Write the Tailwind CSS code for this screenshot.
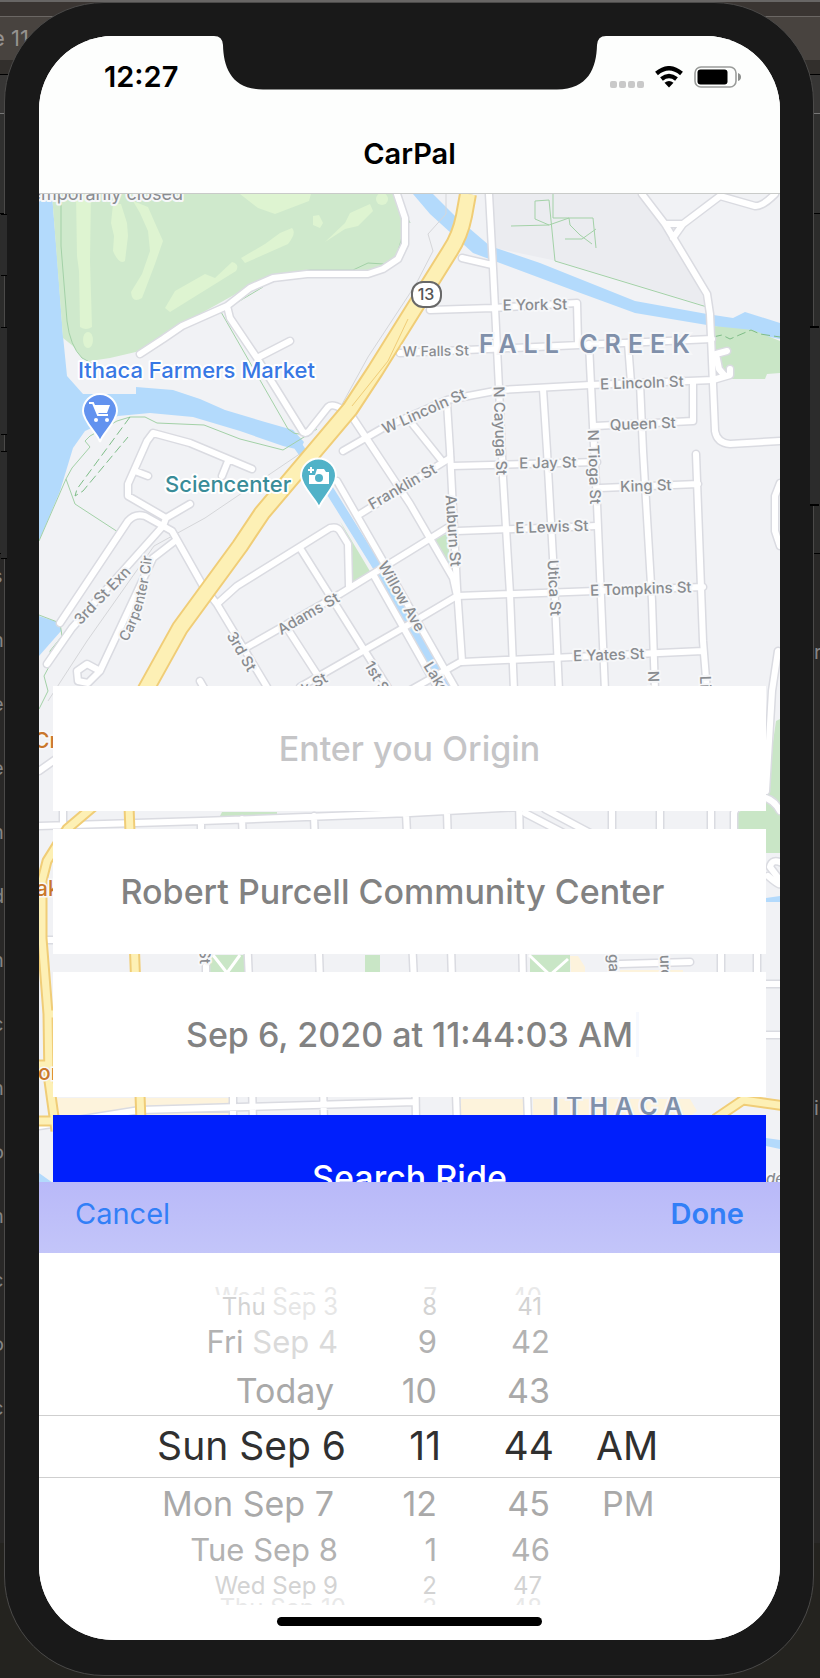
<!DOCTYPE html>
<html lang="en">
<head>
<meta charset="utf-8">
<meta name="viewport" content="width=device-width, initial-scale=1">
<title>CarPal</title>
<script src="https://cdn.jsdelivr.net/npm/@tailwindcss/browser@4"></script>
</head>
<body class="relative overflow-x-hidden bg-[#24231f] pt-[2px] pr-[6px] pb-[2px] pl-1 font-['Inter',sans-serif]">

<!-- Desktop behind the simulator -->
<div class="absolute inset-0 overflow-hidden" aria-hidden="true">
  <div class="h-[2px] bg-[#686665]"></div>
  <div class="h-[14px] bg-[#3a3532]"></div>
  <div class="flex h-[44px] items-center border-t border-[#6b6764] bg-[#48433f] text-[22px] text-[#969290]"><span class="-ml-2">e 11</span></div>
  <div class="h-[15px] border-b border-black bg-[#322f2c]"></div>
  <div class="h-[38px] bg-[#373635]"></div>
  <div class="h-[100px] border-t border-[#777] bg-[#30302f]"></div>
  <div class="h-[340px] border-t border-black bg-[#2c2c2b]"></div>
  <div class="flex h-[990px] justify-between border-t border-black bg-[#292827] text-[20px] text-[#858585]">
    <div class="-ml-2 flex flex-col gap-9 pt-2 leading-7">
      <span>s</span><span>n</span><span>e</span><span>e</span><span>n</span><span>d</span><span>n</span><span>c</span><span>n</span><span>o</span><span>n</span><span>c</span><span>o</span><span>c</span>
    </div>
    <div class="flex w-[6px] flex-col gap-[428px] pt-[84px] leading-7"><span>r</span><span>i</span></div>
  </div>
</div>

<div class="relative rounded-[100px] border border-[#4b4a49] bg-[#191919] pt-[33px] pr-[33px] pb-[35px] pl-[34px]">
  <!-- Hardware buttons -->
  <div class="absolute top-[211px] -left-1 h-[62px] w-[6px] border-y border-black bg-[#2c2c2c]"></div>
  <div class="absolute top-[324px] -left-1 h-[108px] w-[6px] border-y border-black bg-[#2c2c2c]"></div>
  <div class="absolute top-[448px] -left-1 h-[108px] w-[6px] border-y border-black bg-[#2c2c2c]"></div>
  <div class="absolute top-[323px] -right-[6px] h-[180px] w-[9px] border-y-2 border-black bg-[#2c2c2c]"></div>

  <div class="relative overflow-hidden rounded-[74px] bg-white">

    <!-- Status bar and title -->
    <header class="relative z-10 h-[158px] border-b border-[#c9cbc9] bg-[#fdfefd]">
      <svg class="absolute top-0 left-1/2 w-[392px] -translate-x-1/2" viewBox="0 0 392 54" aria-hidden="true">
        <path d="M0 0Q8.500 0 9 9C9.500 32 18 53.500 49 53.500H343C374 53.500 382.500 32 383 9Q383.500 0 392 0Z" fill="#191919"/>
      </svg>
      <div class="flex h-[82px] items-center justify-between pr-[39px] pl-[65px]">
        <time class="text-[29px] font-semibold text-black">12:27</time>
        <div class="flex items-center gap-[11px]">
          <svg width="34" height="22" viewBox="0 0 34 22" fill="#c9c9c9" aria-hidden="true">
            <rect x="0" y="15" width="7" height="7" rx="2"/><rect x="9" y="15" width="7" height="7" rx="2"/><rect x="18" y="15" width="7" height="7" rx="2"/><rect x="27" y="15" width="7" height="7" rx="2"/>
          </svg>
          <svg width="28" height="22" viewBox="0 0 28 22" aria-label="Wi-Fi">
            <path d="M1.500 7.500Q14-3 26.500 7.500M6.500 13Q14 7 21.500 13" fill="none" stroke="#000" stroke-width="4.400"/>
            <path d="M9.500 16.800Q14 13 18.500 16.800L14 21.500Z"/>
          </svg>
          <svg width="47" height="22" viewBox="0 0 47 22" aria-label="Battery">
            <rect x="1" y="1" width="41" height="20" rx="6" fill="none" stroke="#9a9c9a" stroke-width="1.600"/>
            <rect x="3.500" y="3.500" width="30" height="15" rx="3"/>
            <path d="M44 7Q47 8 47 11T44 15Z" fill="#8d8f8d"/>
          </svg>
        </div>
      </div>
      <h1 class="pt-[18px] text-center text-[29px] leading-9 font-semibold text-black">CarPal</h1>
    </header>

    <main class="relative px-[14px] pt-[492px]">
      <!-- Map canvas -->
      <svg class="absolute inset-0 h-full w-full" viewBox="39 193 741 1047" preserveAspectRatio="xMidYMin slice" role="img" aria-label="Map of Ithaca">
        <defs>
          <g id="roads" fill="none" stroke-linecap="round" stroke-linejoin="round">
            <path d="M397 193L405 217V243L398 258L383 268L368 273H307L273 277L250 287L227 305L182 325L163 338L140 353M227 305L230 317L257 357L303 431Q306 433 309 430L328 406Q332 402 342 408M257 357L290 340"/>
            <path d="M489 193L493 267L499 387L503 477L510 593L514 690M462 257L492 264M430 309L493 307L577 302L578 342M400 352L712 338M343 450L383 427L447 399L500 389L590 384L713 379L730 374V368"/>
            <path d="M589 343L593 425L597 503L605 690M628 342L631 382M640 382L643 450L652 600L655 690M693 382V420L595 425M543 388L547 450L553 557L559 690M447 402L450 450L457 587L462 660L400 695"/>
            <path d="M642 193L665 223L707 293L710 313L715 430Q717 442 730 443L780 440M673 237L683 223L720 195L755 205Q762 206 775 193M665 223H683M727 350L716 353L719 368L724 374"/>
            <path d="M452 465L597 461M600 487L698 483M696 453L703 640L707 690M457 530L597 525M457 595L703 586M462 661L703 650"/>
            <path d="M357 515L450 457M337 480L383 560L457 690M373 573L445 700M353 417L410 503L453 577L457 595M410 420L442 460M240 650L340 593L410 550L447 527M300 686L403 627L457 595"/>
            <path d="M60 622L128 520Q135 512 145 515L172 530L203 585L217 603L267 686M217 603L237 585L330 527Q337 525 340 530L348 543L349 585M300 547L390 690M287 627L320 678M200 680L208 694"/>
            <path d="M47 663L72 627L163 525L166 517L128 495V483L147 440L153 432L190 442L252 468M190 503L166 517M135 470L148 475M228 460L222 475M175 540L153 557L100 670M100 670L87 663L77 670L78 680L88 682L100 670M780 482L775 495V530L780 545M778 650L772 690L766 790"/>
            <path d="M39 825L201 820L410 812L520 806M39 770L56 758M63 825V800M201 820V835M242 818L249 980L253 1120M314 815L320 980L324 1120M406 812L414 980L416 1120M447 811L452 980L457 1120M519 800L523 980L528 1120M525 812L575 838M545 808L590 832M612 800V835M660 800V835M711 800V835M734 835V812Q738 800 757 796Q772 795 780 810M721 950V980M757 950V980M206 965V980M233 1090V1120M39 1125L140 1109L415 1101M620 963L690 961M766 983H780M766 1034H780M43 939H56M768 875Q785 890 779 878L770 866Q772 857 782 862"/>
          </g>
          <path id="r13" d="M468 193L464 215Q460 235 450 250L425 290L375 370L350 408L323 440L262 512L240 545L180 627L145 690" fill="none" stroke-linejoin="round"/>
          <path id="yellow" d="M100 800L67 828L47 860L42 880V937L48 1013L49 1080L56 1130M129 805L135 963L141 1120M39 1120H53M39 1064H50M48 1013H56M715 1118L743 1099L785 1105" fill="none" stroke-linejoin="round"/>
          <path id="carpenter" d="M127 641Q149 605 153 540" fill="none"/>
        </defs>
        <rect x="39" y="193" width="741" height="1047" fill="#f1f2f5"/>
        <path d="M492 193H640L690 267L707 305L557 260L495 247Z" fill="#ebecf0"/>
        <path d="M39 193H52L57 255L63 335L67 375L83 393H136V386L173 389L200 398L225 409L265 421L293 429L304 441L300 449L283 445L240 430L193 416L150 412L118 415L85 430L73 447L60 490L39 540ZM39 615L60 622L61 630L39 655ZM413 193H433L455 215L490 245L540 262L635 300L707 313L733 317L745 311L780 322V338L735 329L707 324L635 312L575 290L473 252L430 213ZM39 1172L53 1182L60 1240H39ZM766 897L780 895V901H766ZM766 1137L780 1139V1148L766 1145Z" fill="#b3dafc"/>
        <path d="M298 445L330 490L378 567L408 622L452 694" fill="none" stroke="#b3dafc" stroke-width="9"/>
        <path d="M52 193H397L405 243L398 258L368 271L307 273L250 285L182 323L140 350L110 357L90 360L82 357L73 345L63 337Z" fill="#cfe9cc"/>
        <g fill="#def4d1">
          <path d="M76 193H91L90 260L92 326Q86 330 80 326L79 270L77 255ZM113 203L111 222L114 235L113 250Q119 264 125 260L128 235L127 222L121 203ZM133 200L140 212L148 230L150 250L142 273L131 291Q132 303 142 297L155 263L163 240L155 222L148 206ZM165 307L175 290L205 273L215 277L232 261Q240 263 236 270L170 311ZM241 257L265 243L280 232L292 227Q297 232 288 243L245 262ZM325 241L345 222L350 212L370 203L373 210L358 225L345 228ZM240 193H311L309 200L275 213L258 207ZM313 215L319 214L323 222L320 227L313 224Z"/>
          <ellipse cx="88" cy="339" rx="5" ry="8"/><circle cx="382" cy="198" r="6"/>
        </g>
        <path d="M713 325L753 329L780 340V372L767 373L765 378H723L715 357ZM340 520L350 540V582L371 572ZM432 538L447 533L452 575ZM776 720L780 718V852H738V812L766 790ZM222 811H277V815H220ZM210 954H245V972H210ZM365 954H380V972H365ZM530 954H570V972H530Z" fill="#c9e6c6"/>
        <path d="M570 955H578L585 966V972H571ZM620 969H683V972H620ZM53 1097H229V1115H53ZM461 1098H526V1115H461ZM533 1098H690L697 1110L690 1115H533Z" fill="#fdf3dc"/>
        <g fill="none" stroke="#a3d1a7">
          <path d="M61 193V245L67 320Q70 345 82 357L92 362M397 193L410 222M402 236L396 257L384 263L368 262L353 269H310L275 274L262 280L263 286L221 311L288 428Q300 440 317 425M221 311L227 305M117 420L130 416H145L157 422L204 424L240 438L283 449L317 428M117 420L90 435L85 440L90 446L72 467L66 478L75 503L118 531M66 478L39 540M39 614L60 622L62 635L50 650L52 660L44 675L48 690L39 708M553 193V217H593L596 247M535 200L549 199L555 260L707 306M535 200V218L549 224L569 217L570 224L580 234L592 243M511 225L549 224M565 238H582L596 228"/>
          <path d="M130 416L77 488L75 495L83 490L128 436M713 336L722 334L730 338L751 329L760 333L780 336" stroke="#7fbd88" stroke-dasharray="9 4"/>
        </g>
        <path d="M446 193V213L428 233L433 250L416 283L368 356L340 407M304 450L205 517L154 545L87 640L48 700" fill="none" stroke="#d5d6d9"/>
        <use href="#roads" stroke="#dadbe1" stroke-width="9"/>
        <use href="#roads" stroke="#fff" stroke-width="6"/>
        <path d="M213 954L227 972L240 954M529 954L550 974L568 958" fill="none" stroke="#fff" stroke-width="3"/>
        <use href="#yellow" stroke="#f0cd77" stroke-width="11"/><use href="#yellow" stroke="#fdf0b5" stroke-width="7"/>
        <use href="#r13" stroke="#f0cd77" stroke-width="18"/><use href="#r13" stroke="#fdf0b5" stroke-width="14"/>
        <path d="M408 318L388 360L352 405" fill="none" stroke="#f0cd77"/>

        <rect x="412" y="281" width="29" height="25" rx="11" fill="#fff" stroke="#686868" stroke-width="2"/>
        <text x="426" y="299" text-anchor="middle" font-size="16" font-weight="500" fill="#555">13</text>

        <g font-size="15" font-weight="500" fill="#898c90" stroke="#f6f7f9" stroke-width="4" stroke-linejoin="round" paint-order="stroke" text-anchor="middle">
          <text transform="translate(535 309) rotate(-1)">E York St</text>
          <text transform="translate(436 355) rotate(-1)" font-size="14">W Falls St</text>
          <text transform="translate(642 387) rotate(-2)">E Lincoln St</text>
          <text transform="translate(643 428) rotate(-2)">Queen St</text>
          <text transform="translate(548 467) rotate(-1)">E Jay St</text>
          <text transform="translate(646 490) rotate(-2)">King St</text>
          <text transform="translate(552 531) rotate(-2)">E Lewis St</text>
          <text transform="translate(641 593) rotate(-2)">E Tompkins St</text>
          <text transform="translate(609 659) rotate(-2)">E Yates St</text>
          <text transform="translate(426 415) rotate(-24)">W Lincoln St</text>
          <text transform="translate(405 490) rotate(-30)">Franklin St</text>
          <text transform="translate(311 617) rotate(-30)">Adams St</text>
          <text transform="translate(317 687) rotate(-30)">k St</text>
          <text transform="translate(495 430) rotate(88)">N Cayuga St</text>
          <text transform="translate(589 466) rotate(88)">N Tioga St</text>
          <text transform="translate(448 530) rotate(86)">Auburn St</text>
          <text transform="translate(549 587) rotate(87)">Utica St</text>
          <text transform="translate(397 598) rotate(60)">Willow Ave</text>
          <text transform="translate(423 665) rotate(58)" text-anchor="start">Lake</text>
          <text transform="translate(237 653) rotate(60)">3rd St</text>
          <text transform="translate(364 664) rotate(60)" text-anchor="start">1st St</text>
          <text transform="translate(106 598) rotate(-46)">3rd St Exn</text>
          <text text-anchor="start" font-size="14"><textPath href="#carpenter">Carpenter Cir</textPath></text>
          <text transform="translate(648 670) rotate(88)" text-anchor="start">N A</text>
          <text transform="translate(700 675) rotate(88)" text-anchor="start">Lin</text>
          <text transform="translate(200 963) rotate(88)" text-anchor="end">St</text>
          <text transform="translate(609 971) rotate(88)" text-anchor="end">ga</text>
          <text transform="translate(660 954) rotate(88)" text-anchor="start">uro</text>
          <text x="183" y="199" text-anchor="end" font-size="18" font-weight="400">emporarily closed</text>
          <text x="766" y="1183" text-anchor="start" font-style="italic">de</text>
        </g>
        <g font-size="21" font-weight="500" fill="#c9772b" stroke="#f8f8f8" stroke-width="3" paint-order="stroke">
          <text x="34" y="747">Cr</text><text x="36" y="895">ak</text><text x="38" y="1079">or</text>
        </g>
        <g font-weight="600" fill="#8090aa" stroke="#f6f7f9" stroke-width="4" paint-order="stroke" font-size="25">
          <text x="479" y="352" letter-spacing="7">FALL CREEK</text>
          <text x="552" y="1114" letter-spacing="7">ITHACA</text>
        </g>
        <g stroke="#fff" stroke-width="4" stroke-linejoin="round" paint-order="stroke" font-size="22" font-weight="500">
          <text x="78" y="377" fill="#3878e4">Ithaca Farmers Market</text>
          <text x="165" y="491" fill="#398c98">Sciencenter</text>
        </g>
        <g stroke="#fff" stroke-width="2">
          <path d="M100 441C99 434 83 421 83 410A17 17 0 0 1 117 410C117 421 101 434 100 441Z" fill="#6292ef"/>
          <path d="M319 507C318 500 301 486 301 475A17 17 0 0 1 336 475C336 486 320 500 319 507Z" fill="#51b2c8"/>
        </g>
        <path d="M89 402H93L98 414H108" fill="none" stroke="#fff" stroke-width="2"/>
        <path d="M94 404H110L107 412H97Z" fill="#fff"/><circle cx="96" cy="419" r="2" fill="#fff"/><circle cx="107" cy="419" r="2" fill="#fff"/>
        <path d="M309 474H315L317 468H324L326 471H329V483H309Z" fill="#fff"/>
        <path d="M308 469H314M311 466V472" stroke="#fff" stroke-width="2"/>
        <circle cx="319" cy="477" r="4" fill="#51b2c8"/>
      </svg>

      <form class="relative flex flex-col gap-[18px] text-[34px] font-medium">
        <input type="text" aria-label="Origin" placeholder="Enter you Origin" class="h-[125px] w-full bg-white text-center text-[#828282] outline-none placeholder:text-[#c5c5c7]">
        <input type="text" aria-label="Destination" value="Robert Purcell Community Center" class="h-[125px] w-full bg-white pr-[34px] text-center text-[#828282] outline-none">
        <div class="relative">
          <input type="text" aria-label="Departure time" value="Sep 6, 2020 at 11:44:03 AM" class="h-[125px] w-full bg-white text-center text-[#828282] outline-none">
          <span class="absolute top-10 left-1/2 ml-[226px] h-[45px] w-[3px] bg-[#f7f9fe]" aria-hidden="true"></span>
        </div>
        <button type="button" class="h-[125px] w-full bg-[#001ffc] text-white">Search Ride</button>
      </form>
    </main>

    <!-- Date picker sheet -->
    <section class="relative -mt-[58px] bg-white" aria-label="Departure date and time">
      <div class="flex h-[71px] items-center justify-between bg-linear-to-b from-[#b9b9f9] to-[#c3c5f9] px-9 pb-2 text-[29px] text-[#327ff7]">
        <button type="button">Cancel</button>
        <button type="button" class="font-semibold">Done</button>
      </div>
      <div class="pt-[34px] whitespace-nowrap text-[#a9a9a9]">
        <div class="grid h-2 grid-cols-[185px_95px_113px_104px] items-center justify-center overflow-hidden text-right text-[24px] leading-5 text-[#e9e9e9]">
          <span class="pr-2">Wed Sep 2</span><span class="pr-1">7</span><span class="pr-3">40</span>
        </div>
        <div class="grid h-6 grid-cols-[185px_95px_113px_104px] items-center justify-center text-right text-[24px] leading-6 text-[#d3d3d3]">
          <span class="pr-2">Thu <span class="text-[#e6e6e6]">Sep 3</span></span><span class="pr-1">8</span><span class="pr-3">41</span>
        </div>
        <div class="grid h-[46px] grid-cols-[185px_95px_113px_104px] items-center justify-center text-right text-[31px] text-[#b2b2b2]">
          <span class="pr-2">Fri <span class="text-[#dadada]">Sep 4</span></span><span class="pr-1">9</span><span class="pr-1">42</span>
        </div>
        <div class="grid h-[50px] grid-cols-[185px_95px_113px_104px] items-center justify-center text-right text-[34px]">
          <span class="pr-3">Today</span><span class="pr-1">10</span><span class="pr-1">43</span>
        </div>
        <div class="grid h-[63px] grid-cols-[185px_95px_113px_104px] items-center justify-center border-y border-[#cfcfcf] text-right text-[39px] text-[#303030]">
          <span class="flex justify-end">Sun Sep 6</span><span>11</span><span>44</span><span class="pl-[42px] text-left">AM</span>
        </div>
        <div class="grid h-[49px] grid-cols-[185px_95px_113px_104px] items-center justify-center text-right text-[34px]">
          <span class="pr-3">Mon Sep 7</span><span class="pr-1">12</span><span class="pr-1">45</span><span class="pl-12 text-left">PM</span>
        </div>
        <div class="grid h-[47px] grid-cols-[185px_95px_113px_104px] items-center justify-center text-right text-[31px] text-[#b2b2b2]">
          <span class="pr-2">Tue Sep 8</span><span class="pr-1">1</span><span class="pr-1">46</span>
        </div>
        <div class="grid h-6 grid-cols-[185px_95px_113px_104px] items-center justify-center text-right text-[24px] leading-6 text-[#d3d3d3]">
          <span class="pr-2">Wed Sep 9</span><span class="pr-1">2</span><span class="pr-3">47</span>
        </div>
        <div class="grid h-[7px] grid-cols-[185px_95px_113px_104px] justify-center overflow-hidden text-right text-[24px] leading-5 text-[#e9e9e9]">
          <span>Thu Sep 10</span><span class="pr-1">3</span><span class="pr-3">48</span>
        </div>
      </div>
      <div class="pt-3 pb-[14px]"><div class="mx-auto h-[9px] w-[265px] rounded-full bg-black"></div></div>
    </section>
  </div>
</div>
</body>
</html>
